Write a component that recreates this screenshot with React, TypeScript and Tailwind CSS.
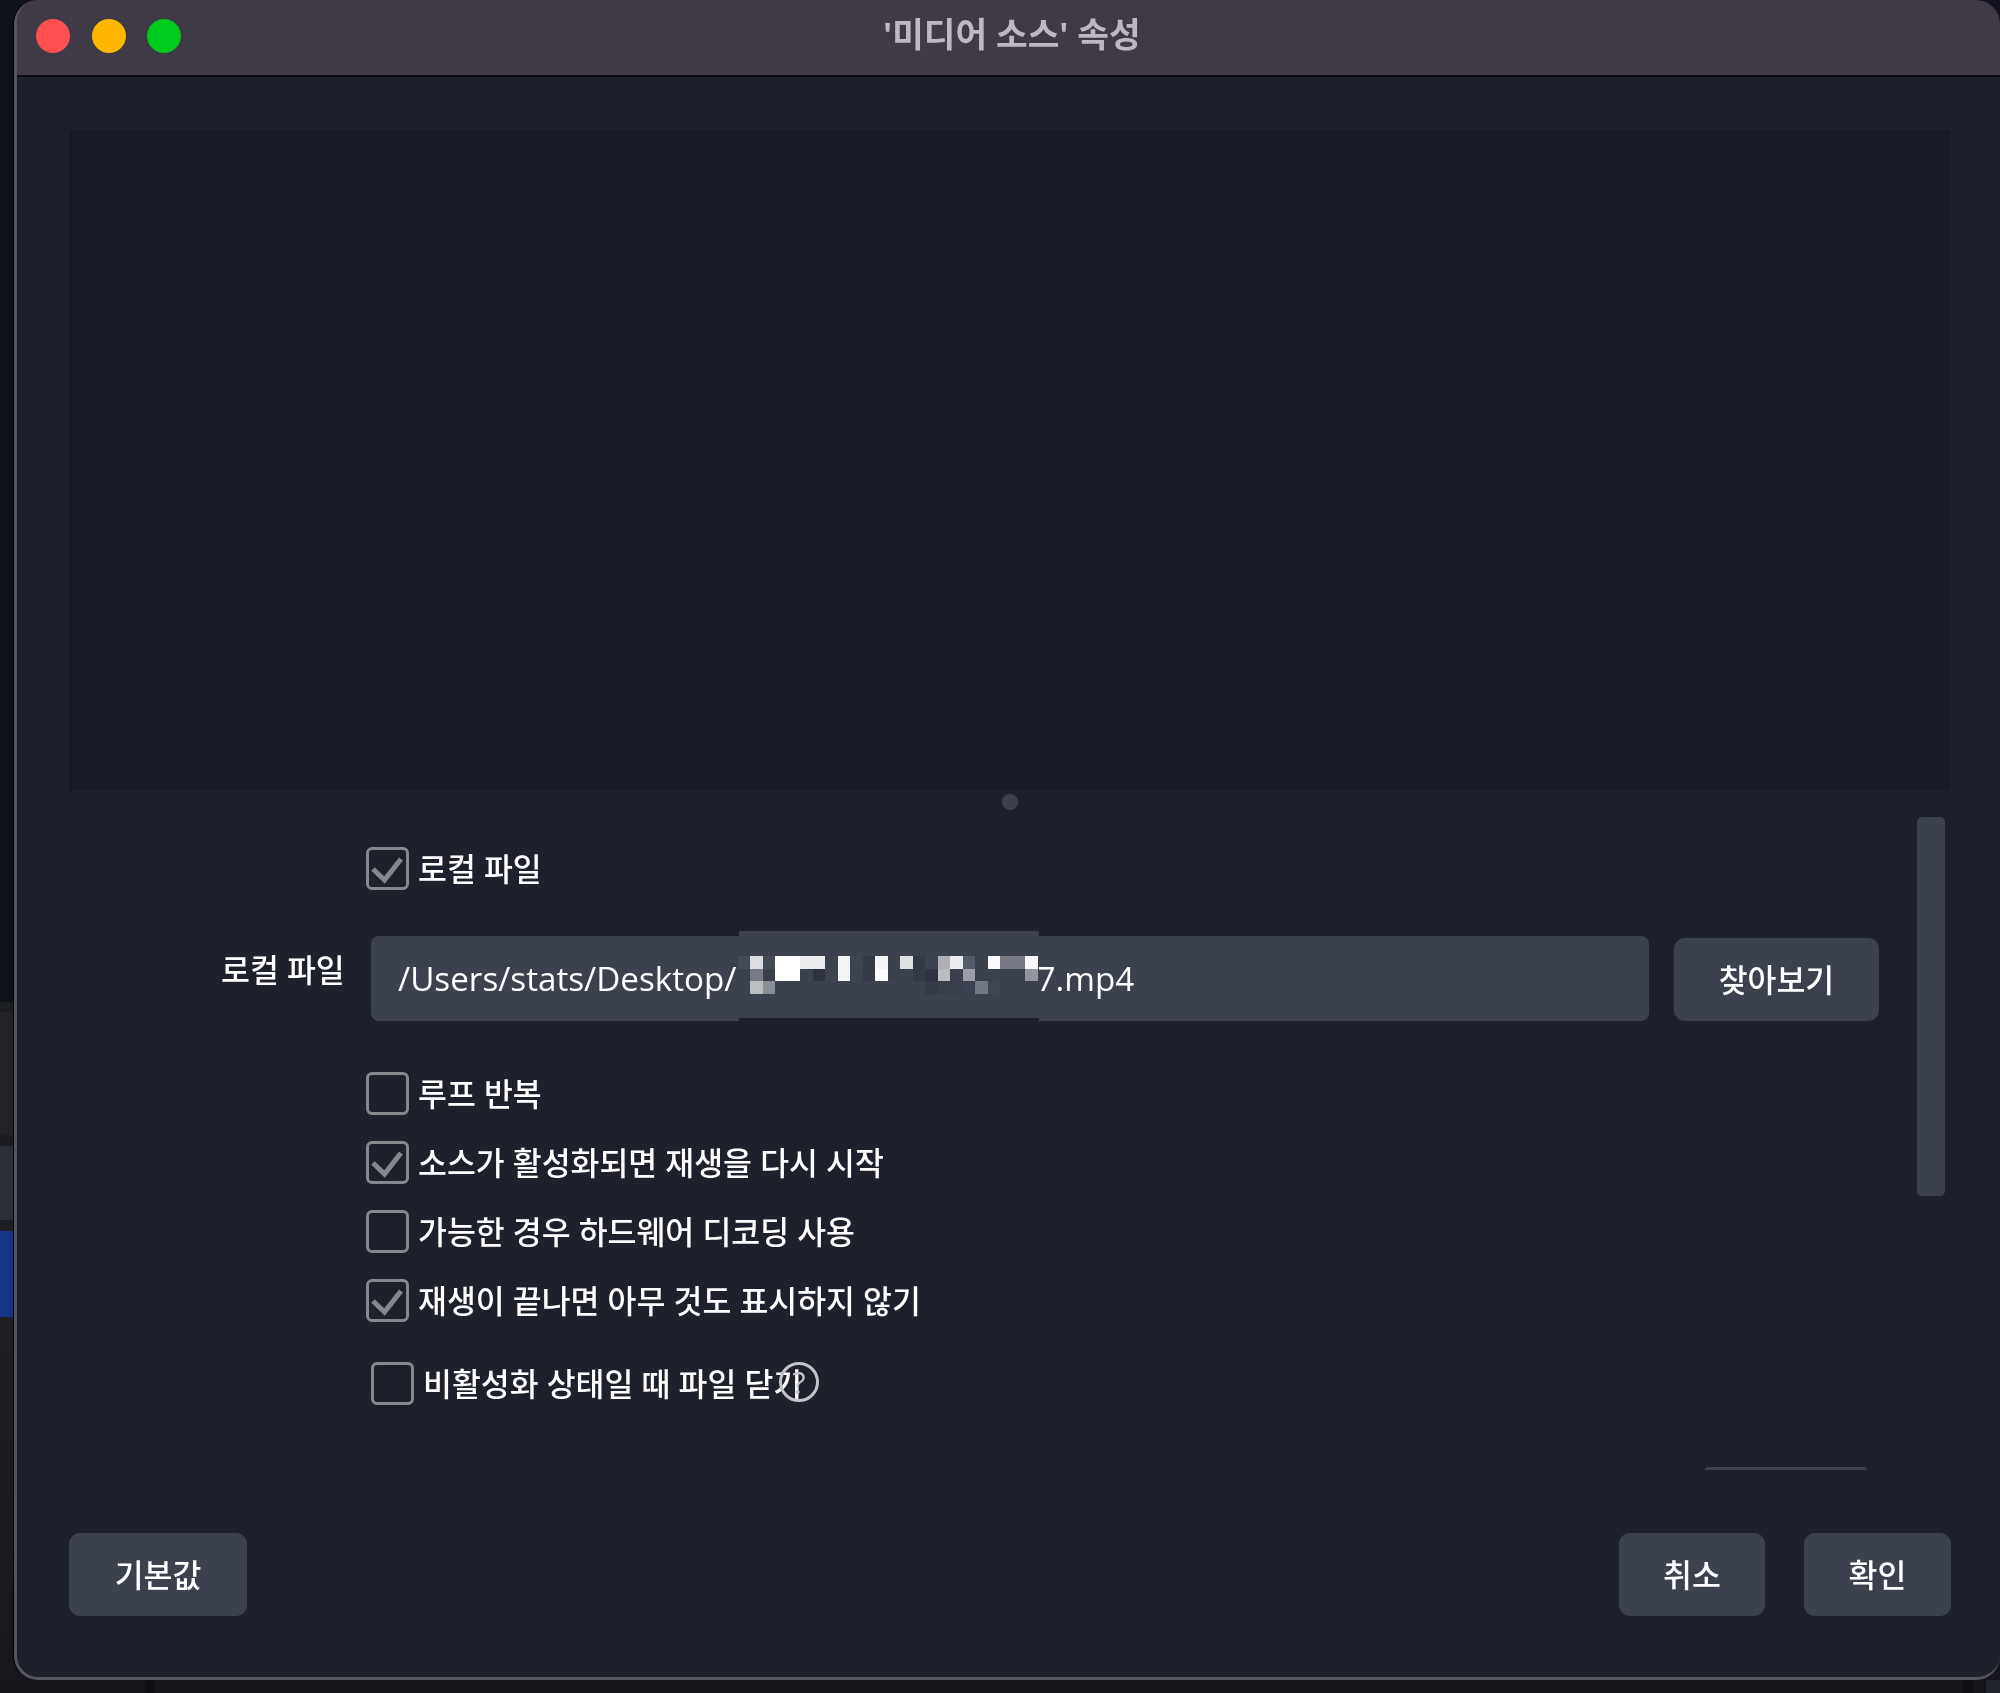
import React from "react";

const B = "#3c414e";
const mosaic: string[][] = [
  ["#444b58","#dcdde0","#434a57","#ffffff","#ffffff","#ebecee","#ebecee",B,"#f5f5f7","#3e4350","#343946","#f5f5f8",B,"#dfe0e3","#343946","#3d4250","#afb0b5","#ebecef","#545a67",B,"#fafafc","#777a84","#777a84","#f8f8fb"],
  ["#3b404d","#767b86","#3a3f4c","#ffffff","#ffffff",B,"#2f3341",B,"#f5f5f7",B,"#343946","#fdfdfe","#3a3f4c",B,"#343946","#2f3341","#bcbdc1","#3a3f4c","#9c9da6","#3a404d",B,B,B,"#92959d"],
  [B,"#bcbdc1","#8a8e96",B,B,B,B,B,B,B,B,B,B,B,B,"#343946","#393e4b","#393e4b","#3c4150","#727884","#3f4451","#3c414e","#3c414e","#3c414e"],
];

const font = "[font-family:'Open_Sans','Noto_Sans_CJK_KR',sans-serif]";

function Check({ checked }: { checked?: boolean }) {
  return (
    <span className="flex h-[43px] w-[43px] shrink-0 items-center justify-center rounded-[6px] border-[3px] border-[#87888d] bg-[#1e202b]">
      {checked && (
        <svg viewBox="0 0 37 37" className="h-[37px] w-[37px]" fill="none">
          <path d="M4 19 L15.5 30 L32 9" stroke="#87888d" strokeWidth="5" />
        </svg>
      )}
    </span>
  );
}

function CheckRow({ label, checked, className = "" }: { label: string; checked?: boolean; className?: string }) {
  return (
    <div className={`flex h-[43px] items-center gap-[9px] ${className}`}>
      <Check checked={checked} />
      <span className="text-[31.4px] leading-none font-medium whitespace-nowrap text-white">{label}</span>
    </div>
  );
}

function Btn({ label, className = "" }: { label: string; className?: string }) {
  return (
    <button className={`flex items-center justify-center rounded-[11px] bg-[#3c414e] text-[31.4px] leading-none font-medium text-white ${className}`}>
      {label}
    </button>
  );
}

export default function App() {
  return (
    <div className={`flex h-[1693px] w-[2000px] flex-col overflow-hidden bg-gradient-to-b from-[#10131e] to-[#16171c] ${font} antialiased blur-[0.4px]`}>
      <div className="flex h-[1680px]">
        <div className="flex w-[14px] shrink-0 flex-col">
          <div className="h-[1002px] bg-[#0f111a]" />
          <div className="h-[10px] bg-[#1c1d22]" />
          <div className="h-[123px] bg-[#222329]" />
          <div className="h-[11px] bg-[#1c1d22]" />
          <div className="h-[74px] bg-[#2c2f37]" />
          <div className="h-[11px] bg-[#1e1f25]" />
          <div className="h-[86px] bg-[#153586]" />
          <div className="flex-1 bg-gradient-to-b from-[#1f1f26] to-[#17181d]" />
        </div>
        <div className="flex w-[1986px] flex-col overflow-hidden rounded-[24px] border-b-[3px] border-l-[3px] border-[#55555d] bg-[#1e202b] shadow-[-1px_0_0_#000]">
          <div className="flex h-[77px] shrink-0 items-center border-b-[2px] border-[#0c0c10] bg-[#3f3a45] pl-[19px]">
            <div className="mb-[3px] flex w-[145px] gap-[21.5px]">
              <span className="h-[34px] w-[34px] rounded-full bg-[#fe5050]" />
              <span className="h-[34px] w-[34px] rounded-full bg-[#ffb700]" />
              <span className="h-[34px] w-[34px] rounded-full bg-[#00c91e]" />
            </div>
            <div className="ml-[702px] mb-[6px] text-[34.4px] leading-none font-bold whitespace-nowrap text-[#bdb8c2]">
              '미디어 소스' 속성
            </div>
          </div>

          <div className="flex flex-col pl-[52px] pr-[49px] pt-[53px]">
            <div className="h-[661px] bg-[#181b27]" />
            <div className="flex h-[25px] items-center justify-center">
              <span className="mt-[-4px] h-[16px] w-[16px] rounded-full bg-[#3c414e]" />
            </div>

            <div className="flex h-[654px]">
              <div className="flex w-[1848px] flex-col pt-[31px]">
                <CheckRow label="로컬 파일" checked className="ml-[297px]" />

                <div className="mt-[46px] flex items-start">
                  <div className="mt-[14px] w-[275px] pl-[152px] text-[31.4px] leading-[40px] font-medium whitespace-nowrap text-white">로컬 파일</div>
                  <div className="relative ml-[27px] flex h-[85px] w-[1278px] items-center rounded-[8px] bg-[#3c414e] pl-[27px] text-[33.2px] text-white">
                    <span>/Users/stats/Desktop/</span>
                    <span className="w-[300px] shrink-0" />
                    <span>7.mp4</span>
                    <div className="absolute left-[368px] top-[-5px] h-[90px] w-[300px] border-b-[3px] border-[#1e202b] bg-[#3c414e] pt-[25px]">
                      <div className="ml-[-1.5px] grid grid-cols-[repeat(24,12.5px)] grid-rows-[repeat(3,12.5px)]">
                        {mosaic.flat().map((c, i) => (
                          <span key={i} style={{ backgroundColor: c }} />
                        ))}
                      </div>
                    </div>
                  </div>
                  <Btn label="찾아보기" className="ml-[25px] mt-[2px] h-[83px] w-[205px]" />
                </div>

                <CheckRow label="루프 반복" className="ml-[297px] mt-[51px]" />
                <CheckRow label="소스가 활성화되면 재생을 다시 시작" checked className="ml-[297px] mt-[26px]" />
                <CheckRow label="가능한 경우 하드웨어 디코딩 사용" className="ml-[297px] mt-[26px]" />
                <CheckRow label="재생이 끝나면 아무 것도 표시하지 않기" checked className="ml-[297px] mt-[26px]" />

                <div className="relative ml-[302px] mt-[40px] flex h-[43px] items-center gap-[9px]">
                  <Check />
                  <span className="text-[31.4px] leading-none font-medium whitespace-nowrap text-white">비활성화 상태일 때 파일 닫기</span>
                  <span className="absolute left-[408px] top-[0px] flex h-[40px] w-[40px] items-center justify-center rounded-full border-[3px] border-[#c4c4c8] text-[31px] leading-none text-[#c4c4c8]">?</span>
                </div>

                <div className="ml-[1636px] mt-[62px] h-[3px] w-[162px] rounded-t-[6px] bg-[#3c414e]" />
              </div>
              <div className="ml-0 mt-[1px] h-[379px] w-[28px] rounded-[5px] bg-[#3c414e]" />
            </div>

            <div className="mt-[63px] flex h-[83px] justify-between">
              <Btn label="기본값" className="h-[83px] w-[178px]" />
              <div className="flex gap-[39px]">
                <Btn label="취소" className="h-[83px] w-[146px]" />
                <Btn label="확인" className="h-[83px] w-[147px]" />
              </div>
            </div>
          </div>
        </div>
      </div>
      <div className="flex h-[13px] bg-[#15161b]">
        <div className="ml-[145px] w-[10px] bg-[#0f0f13]" />
        <div className="ml-[1807px] w-[11px] bg-[#0f0f13]" />
        <div className="ml-[13px] w-[14px] bg-[#23252c]" />
      </div>
    </div>
  );
}
